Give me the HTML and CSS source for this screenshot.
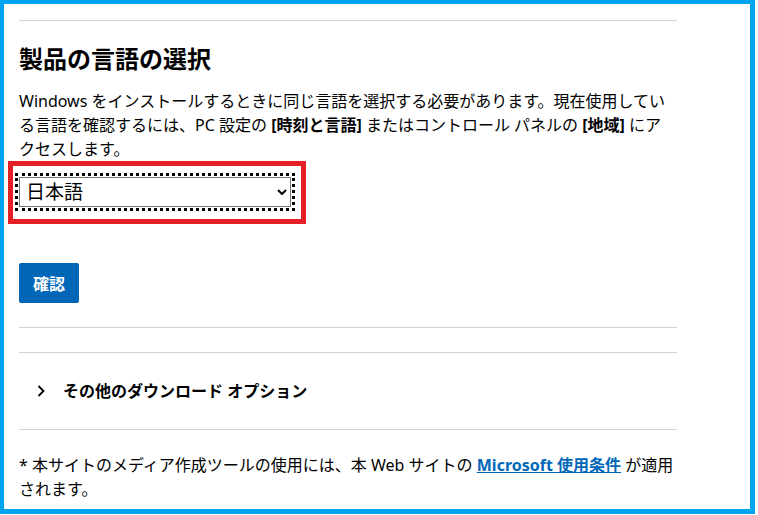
FILE: index.html
```html
<!DOCTYPE html>
<html lang="ja">
<head>
<meta charset="UTF-8" />
<meta name="viewport" content="width=device-width, initial-scale=1.0" />
<title>製品の言語の選択</title>
<link rel="stylesheet" href="styles.css">
</head>
<body>
<div class="frame">
  <div class="content">
    <hr class="rule first">

    <h2 class="title">製品の言語の選択</h2>
    <p class="desc">Windows をインストールするときに同じ言語を選択する必要があります。現在使用している言語を確認するには、PC 設定の <b>[時刻と言語]</b> またはコントロール パネルの <b>[地域]</b> にアクセスします。</p>

    <!-- highlighted language picker -->
    <div class="mark">
      <div class="select-wrap">
        <select class="lang" id="langSelect">
          <option>日本語</option>
          <option>English (United States)</option>
          <option>한국어</option>
          <option>中文(简体)</option>
        </select>
        <svg class="select-arrow" width="10" height="6" viewBox="0 0 10 6">
          <path d="M1 1 L5 5 L9 1" fill="none" stroke="#000" stroke-width="2"/>
        </svg>
      </div>
    </div>

    <button class="confirm" type="button">確認</button>

    <hr class="rule after-btn">
    <hr class="rule">

    <div class="more">
      <svg class="more-arrow" width="8" height="12" viewBox="0 0 8 12">
        <path d="M1.5 1 L6.5 6 L1.5 11" fill="none" stroke="#000" stroke-width="1.8"/>
      </svg>
      <span>その他のダウンロード オプション</span>
    </div>

    <hr class="rule">

    <p class="note">* 本サイトのメディア作成ツールの使用には、本 Web サイトの <a href="#">Microsoft 使用条件</a> が適用されます。</p>
  </div>
</div>
</body>
</html>
```

FILE: styles.css
```css
html, body {
  margin: 0;
  padding: 0;
  background: #fff;
}
body {
  font-family: "Noto Sans", "Noto Sans CJK JP", sans-serif;
  color: #000;
  font-size: 16px;
  line-height: 24px;
}
.frame {
  box-sizing: border-box;
  width: 755px;
  height: 514px;
  border: 4px solid #00a4ef;
  border-right-width: 5px;
  border-bottom-width: 5px;
  overflow: hidden;
}
.content {
  width: 658px;
  margin-left: 15px;
}
.rule {
  border: none;
  border-top: 1px solid #d2d2d2;
  margin: 0;
  height: 0;
}
.rule.first {
  margin-top: 16px;
}
.title {
  font-size: 24px;
  line-height: 32px;
  font-weight: 700;
  margin: 22px 0 0;
}
.desc {
  width: 648px;
  margin: 14px 0 0;
}
.desc b {
  font-weight: 700;
}
.mark {
  display: inline-block;
  margin-left: -11px;
  border: 5px solid #e41f28;
  padding: 11px 10px 12px 6px;
}
.select-wrap {
  position: relative;
  width: 272px;
}
.lang {
  -webkit-appearance: none;
  appearance: none;
  box-sizing: border-box;
  display: block;
  width: 272px;
  height: 30px;
  margin: 0;
  padding: 0 20px 0 6px;
  border: 1px solid #767676;
  border-radius: 0;
  background: #fff;
  color: #000;
  font-family: "Noto Sans", "Noto Sans CJK JP", sans-serif;
  font-size: 19px;
  outline: 3px dotted #000;
  outline-offset: 1px;
}
.select-arrow {
  position: absolute;
  right: 4px;
  top: 12px;
  pointer-events: none;
}
.confirm {
  display: block;
  margin-top: 39px;
  width: 60px;
  height: 40px;
  padding: 0;
  border: none;
  border-radius: 2px;
  background: #0067b8;
  color: #fff;
  font-family: "Noto Sans", "Noto Sans CJK JP", sans-serif;
  font-size: 16px;
  font-weight: 700;
  cursor: pointer;
}
.rule.after-btn {
  margin-top: 24px;
  margin-bottom: 24px;
}
.more {
  display: flex;
  align-items: center;
  padding: 26px 0 26px 18px;
  font-weight: 700;
}
.more-arrow {
  margin-right: 18px;
}
.note {
  margin: 23px 0 0;
}
.note a {
  color: #0067b8;
  font-weight: 700;
  text-decoration: underline;
}
```
